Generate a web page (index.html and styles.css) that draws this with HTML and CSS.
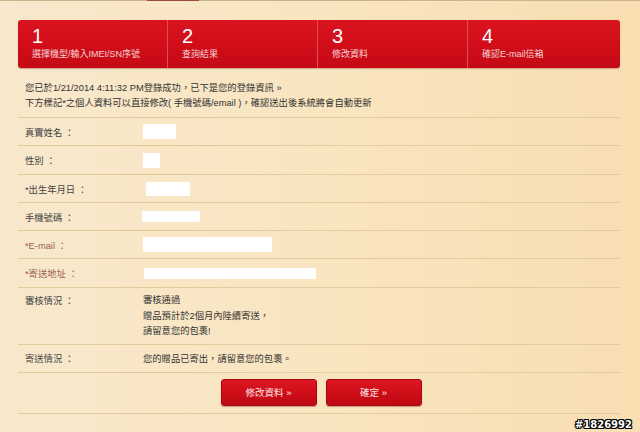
FILE: index.html
```html
<!DOCTYPE html>
<html lang="zh-Hant">
<head>
<meta charset="utf-8">
<link rel="stylesheet" href="styles.css">
</head>
<body>
<div class="page">
  <div class="topstrip"><span class="strip-red"></span></div>
  <div class="steps">
    <div class="step"><div class="num">1</div><div class="lbl">選擇機型/輸入IMEI/SN序號</div></div>
    <div class="step"><div class="num">2</div><div class="lbl">查詢結果</div></div>
    <div class="step"><div class="num">3</div><div class="lbl">修改資料</div></div>
    <div class="step last"><div class="num">4</div><div class="lbl">確認E-mail信箱</div></div>
  </div>
  <div class="intro">
    <p>您已於1/21/2014 4:11:32 PM登錄成功，已下是您的登錄資訊 »</p>
    <p>下方標記*之個人資料可以直接修改( 手機號碼/email )，確認送出後系統將會自動更新</p>
  </div>
  <div class="table">
    <div class="row"><div class="label">真實姓名 ：</div><div class="value"><span class="box b-name"></span></div></div>
    <div class="row r29"><div class="label">性別 ：</div><div class="value"><span class="box b-sex"></span></div></div>
    <div class="row"><div class="label">*出生年月日 ：</div><div class="value"><span class="box b-birth"></span></div></div>
    <div class="row"><div class="label">手機號碼 ：</div><div class="value"><span class="box b-phone"></span></div></div>
    <div class="row"><div class="label red">*E-mail ：</div><div class="value"><span class="box b-mail"></span></div></div>
    <div class="row r29"><div class="label red">*寄送地址 ：</div><div class="value"><span class="box b-addr"></span></div></div>
    <div class="row multi"><div class="label">審核情況 ：</div><div class="value">審核通過<br>贈品預計於2個月內陸續寄送，<br>請留意您的包裹!</div></div>
    <div class="row"><div class="label">寄送情況 ：</div><div class="value">您的贈品已寄出，請留意您的包裹。</div></div>
    <div class="buttons">
      <a class="btn">修改資料 »</a>
      <a class="btn">確定 »</a>
    </div>
  </div>
  <div class="watermark">#1826992</div>
</div>
</body>
</html>
```

FILE: styles.css
```css
html, body {
  margin: 0;
  padding: 0;
}
body {
  width: 640px;
  height: 432px;
  overflow: hidden;
  background: linear-gradient(to right, #f8e8cc 0%, #f9e4bd 60%, #f8deb1 100%);
  font-family: "Liberation Sans", "Noto Sans CJK TC", sans-serif;
  font-size: 9.3px;
  color: #3a3a3a;
}
.page {
  position: relative;
  height: 432px;
}
.topstrip {
  height: 1px;
  background: #c9b58c;
  position: relative;
}
.strip-red {
  position: absolute;
  left: 147px;
  width: 52px;
  top: 0;
  height: 1px;
  background: #9c4a3c;
}
.steps {
  display: flex;
  margin: 19px 20px 0 18px;
  height: 48px;
  border-radius: 3px;
  background: linear-gradient(to bottom, #d9141f 0%, #d00d19 55%, #c40a15 100%);
  box-shadow: 0 1px 1px rgba(140, 40, 30, 0.35);
}
.step {
  border-right: 1px solid #e24a55;
  padding: 7px 0 0 14px;
  box-sizing: border-box;
  width: 150px;
  color: #fff;
}
.step.last {
  border-right: none;
  flex: 1;
}
.num {
  font-size: 20px;
  line-height: 18px;
  height: 18px;
}
.lbl {
  margin-top: 3px;
  font-size: 9px;
  line-height: 12px;
  color: #f6d3d3;
  white-space: nowrap;
}
.intro {
  padding: 13px 0 0 25px;
  height: 36px;
}
.intro p {
  margin: 0;
  line-height: 15px;
  white-space: nowrap;
  color: #333;
}
.table {
  margin: 0 20px 0 18px;
  border-top: 1px solid #e2cb9c;
}
.row {
  display: flex;
  align-items: center;
  height: 27px;
  border-bottom: 1px solid #e2cb9c;
  padding-left: 7px;
}
.row.r29 {
  height: 28px;
}
.row.multi {
  align-items: flex-start;
  height: auto;
  padding-top: 5px;
  padding-bottom: 4px;
  line-height: 15.5px;
}
.row.multi .label {
  line-height: 16px;
}
.label {
  width: 118px;
  color: #444;
  white-space: nowrap;
}
.label.red {
  color: #9c5e54;
}
.value {
  color: #333;
  white-space: nowrap;
}
.box {
  display: block;
  background: #ffffff;
}
.b-name { width: 33px; height: 15px; }
.b-sex { width: 17px; height: 15px; }
.b-birth { width: 44px; height: 14px; margin-left: 3px; }
.b-phone { width: 58px; height: 11px; margin-left: -1px; }
.b-mail { width: 129px; height: 15px; }
.b-addr { width: 172px; height: 11px; margin-left: 1px; }
.buttons {
  display: flex;
  justify-content: center;
  gap: 9px;
  padding: 6px 0 7px 4px;
  border-bottom: 1px solid #e2cb9c;
}
.btn {
  display: flex;
  align-items: center;
  justify-content: center;
  width: 96px;
  height: 27px;
  box-sizing: border-box;
  border-radius: 3px;
  border: 1px solid #a80812;
  background: linear-gradient(to bottom, #dc1722 0%, #cc0c17 60%, #bd0912 100%);
  box-shadow: 0 1px 1px rgba(120, 40, 30, 0.4);
  color: #fbe3e3;
  font-size: 9.5px;
}
.watermark {
  position: absolute;
  right: 8px;
  bottom: 2px;
  font-family: "DejaVu Sans", sans-serif;
  font-weight: bold;
  font-size: 10px;
  color: #fff;
  text-shadow: 1px 0 0 #000, -1px 0 0 #000, 0 1px 0 #000, 0 -1px 0 #000, 1px 1px 0 #000, -1px -1px 0 #000, 1px -1px 0 #000, -1px 1px 0 #000;
}
```
